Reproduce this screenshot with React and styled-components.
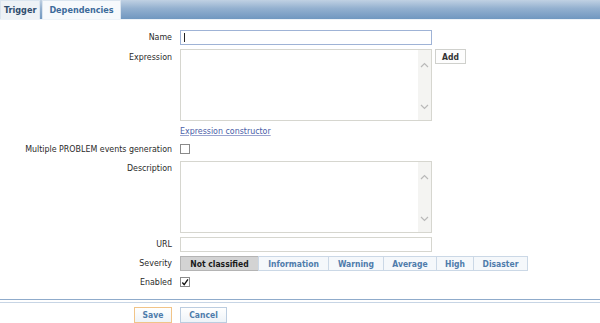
import styled, { createGlobalStyle } from 'styled-components'

const GlobalStyle = createGlobalStyle`
    html, body {
        margin: 0;
        padding: 0;
        background: #fff;
    }
    body {
        font-family: "DejaVu Sans Condensed", "DejaVu Sans", sans-serif;
        font-size: 9px;
        color: #1f1f1f;
    }
`

const Page = styled.div`
    width: 600px;
    height: 323px;
    overflow: hidden;
    display: flex;
    flex-direction: column;
`

const TabBar = styled.div`
    height: 22px;
    display: flex;
    align-items: flex-end;
    gap: 2px;
    background: linear-gradient(#c0d1e3 0%, #93b0cf 45%, #7097c0 100%);
    border-bottom: 1px solid #eef3f8;
`

const Tab = styled.div`
    height: 19px;
    box-sizing: border-box;
    padding: 0 ${p => p.$pad}px;
    display: flex;
    align-items: center;
    font-weight: bold;
    font-size: 9px;
    border: 1px solid #dbe5ef;
    border-bottom: none;
    background: ${p => (p.$active ? '#eef2f6' : '#f6f9fc')};
    color: ${p => (p.$active ? '#2f4d6e' : '#3d6b9b')};
`

const Form = styled.div`
    display: grid;
    grid-template-columns: 172px 1fr;
    column-gap: 8px;
    row-gap: 4px;
    padding-top: 10px;
`

const Label = styled.div`
    text-align: right;
    color: #2a2a2a;
    font-size: 8.8px;
    line-height: 15px;
    padding-top: ${p => p.$top || 0}px;
    white-space: nowrap;
`

const Field = styled.div`
    display: flex;
    align-items: flex-start;
    gap: 3px;
`

const TextInput = styled.div`
    width: 252px;
    height: 15px;
    box-sizing: border-box;
    border: 1px solid ${p => (p.$focus ? '#9fb3d6' : '#d6d6cf')};
    background: #fff;
    position: relative;
`

const Caret = styled.span`
    position: absolute;
    left: 3px;
    top: 2px;
    width: 1px;
    height: 9px;
    background: #222;
`

const TextArea = styled.div`
    width: 252px;
    height: 72px;
    box-sizing: border-box;
    border: 1px solid #d6d6cf;
    background: #fff;
    display: flex;
    justify-content: flex-end;
`

const Scroll = styled.div`
    width: 13px;
    background: #f4f4f2;
    display: flex;
    flex-direction: column;
    justify-content: space-between;
    align-items: center;
    padding: 12px 0 10px;
`

const SmallButton = styled.div`
    height: 15px;
    box-sizing: border-box;
    padding: 0 6px;
    border: 1px solid #cfd0cc;
    background: #fdfdfd;
    font-weight: bold;
    font-size: 8.5px;
    color: #333;
    display: flex;
    align-items: center;
`

const LinkRow = styled.div`
    margin-top: -2px;
    height: 15px;
    display: flex;
    align-items: center;
`

const Link = styled.span`
    color: #4a5ea8;
    text-decoration: underline;
    text-decoration-color: #9aa4cf;
    font-size: 8.8px;
`

const Check = styled.div`
    width: 10px;
    height: 10px;
    box-sizing: border-box;
    border: 1px solid #8a8a8a;
    background: #fff;
    margin-top: 2px;
    display: flex;
    align-items: center;
    justify-content: center;
`

const Segments = styled.div`
    display: flex;
`

const Segment = styled.div`
    height: 15px;
    box-sizing: border-box;
    width: ${p => p.$w}px;
    border: 1px solid ${p => (p.$on ? '#b4b4b4' : '#cbd8e6')};
    margin-left: -1px;
    background: ${p => (p.$on ? '#d3d3d3' : '#f5f8fb')};
    color: ${p => (p.$on ? '#1a1a1a' : '#4f7cab')};
    font-weight: bold;
    font-size: 8.5px;
    display: flex;
    align-items: center;
    justify-content: center;
    &:first-child {
        margin-left: 0;
    }
`

const Separator = styled.div`
    margin-top: 9px;
    height: 2px;
    border-top: 1px solid #8fabcb;
    border-bottom: 1px solid #c7d5e5;
`

const Footer = styled.div`
    display: grid;
    grid-template-columns: 172px 1fr;
    column-gap: 8px;
    padding-top: 4px;
`

const FooterButton = styled.div`
    justify-self: ${p => (p.$right ? 'end' : 'start')};
    width: ${p => p.$w}px;
    height: 16px;
    box-sizing: border-box;
    border: 1px solid ${p => (p.$primary ? '#f1c488' : '#bccde0')};
    background: linear-gradient(#ffffff, #eef3f8);
    color: #4f7cab;
    font-weight: bold;
    font-size: 8.5px;
    display: flex;
    align-items: center;
    justify-content: center;
`

function Arrow({ up }) {
    return (
        <svg width="9" height="6" viewBox="0 0 9 6">
            <path d={up ? 'M1 5 L4.5 1.5 L8 5' : 'M1 1 L4.5 4.5 L8 1'} fill="none" stroke="#b9b9b9" strokeWidth="1.2" />
        </svg>
    )
}

function Box() {
    return (
        <TextArea>
            <Scroll>
                <Arrow up />
                <Arrow />
            </Scroll>
        </TextArea>
    )
}

const severities = [
    ['Not classified', 79, true],
    ['Information', 71],
    ['Warning', 56],
    ['Average', 54],
    ['High', 38],
    ['Disaster', 55],
]

export default function App() {
    return (
        <Page>
            <GlobalStyle />
            <TabBar>
                <Tab $active $pad={3}>Trigger</Tab>
                <Tab $pad={6}>Dependencies</Tab>
            </TabBar>
            <Form>
                <Label>Name</Label>
                <Field>
                    <TextInput $focus><Caret /></TextInput>
                </Field>

                <Label $top={1}>Expression</Label>
                <Field>
                    <Box />
                    <SmallButton>Add</SmallButton>
                </Field>

                <div />
                <LinkRow>
                    <Link>Expression constructor</Link>
                </LinkRow>

                <Label>Multiple PROBLEM events generation</Label>
                <Field>
                    <Check />
                </Field>

                <Label>Description</Label>
                <Field>
                    <Box />
                </Field>

                <Label>URL</Label>
                <Field>
                    <TextInput />
                </Field>

                <Label>Severity</Label>
                <Field>
                    <Segments>
                        {severities.map(([name, w, on]) => (
                            <Segment key={name} $w={w} $on={on}>{name}</Segment>
                        ))}
                    </Segments>
                </Field>

                <Label>Enabled</Label>
                <Field>
                    <Check>
                        <svg width="9" height="9" viewBox="0 0 9 9">
                            <path d="M1.5 4.5 L3.6 7 L7.8 1" fill="none" stroke="#111" strokeWidth="1.5" />
                        </svg>
                    </Check>
                </Field>
            </Form>
            <Separator />
            <Footer>
                <FooterButton $right $primary $w={38}>Save</FooterButton>
                <FooterButton $w={47}>Cancel</FooterButton>
            </Footer>
        </Page>
    )
}
